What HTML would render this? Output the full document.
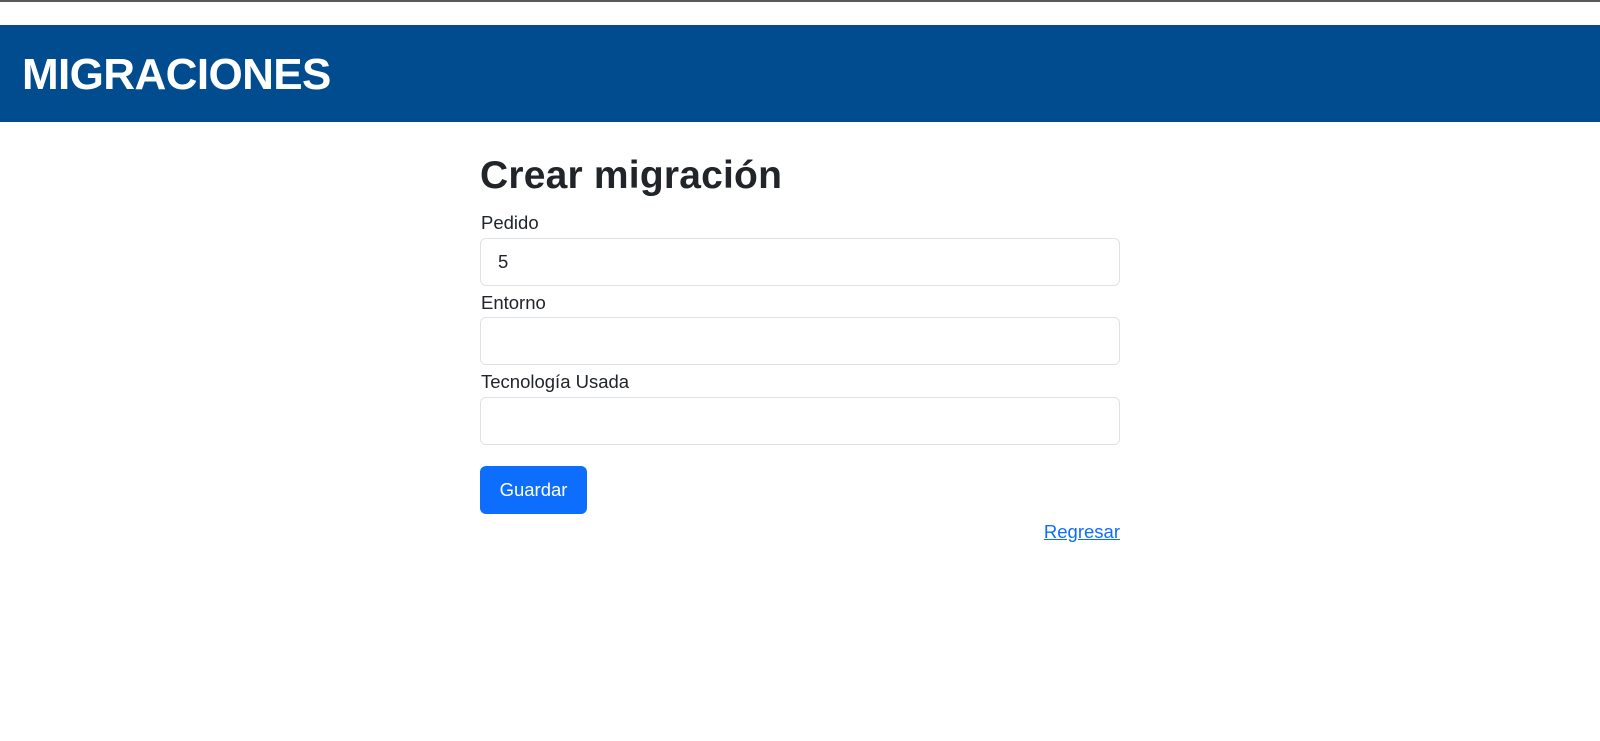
<!DOCTYPE html>
<html><head><meta charset="utf-8"><style>
body{margin:0;width:1600px;height:741px;background:#fff;font-family:"Liberation Sans",sans-serif;color:#212529;position:relative;overflow:hidden}
.top{position:absolute;left:0;top:0;width:1600px;height:2px;background:#5a5a5a}
.hdr{position:absolute;left:0;top:25px;width:1600px;height:97px;background:#004c8f}
.hdr h1{position:absolute;left:22px;top:26px;margin:0;color:#fff;font-size:44px;font-weight:bold;letter-spacing:-0.6px;line-height:48px}
h2{position:absolute;left:480px;top:153px;margin:0;font-size:39px;font-weight:bold;line-height:46px;color:#212529;letter-spacing:0.2px}
.lbl{position:absolute;left:481px;font-size:18.5px;line-height:22px}
.in{position:absolute;left:480px;width:638px;height:46px;border:1px solid #dee2e6;border-radius:6px;font-size:18.5px;line-height:46px;text-indent:17px}
.btn{position:absolute;left:480px;top:466px;width:107px;height:48px;background:#0d6efd;border-radius:6px;color:#fff;font-size:18.5px;line-height:48px;text-align:center}
.lnk{position:absolute;right:480px;top:521px;font-size:18.5px;color:#0d6efd;text-decoration:underline;line-height:22px}
</style></head><body>
<div class="top"></div>
<div class="hdr"><h1>MIGRACIONES</h1></div>
<h2>Crear migración</h2>
<div class="lbl" style="top:212px">Pedido</div>
<div class="in" style="top:238px">5</div>
<div class="lbl" style="top:292px">Entorno</div>
<div class="in" style="top:317px"></div>
<div class="lbl" style="top:371px">Tecnología Usada</div>
<div class="in" style="top:397px"></div>
<div class="btn">Guardar</div>
<div class="lnk">Regresar</div>
</body></html>
